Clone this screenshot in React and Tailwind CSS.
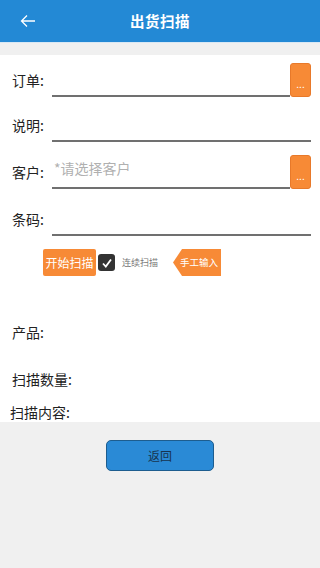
import React from "react";

const font = { fontFamily: '"Noto Sans CJK SC", "Noto Sans", sans-serif' };

function DotsButton() {
  return (
    <div className="w-[21px] h-[34px] shrink-0 rounded-[3px] bg-[#f78a36] border border-[#e8792a] flex items-center justify-center">
      <span className="text-white text-[10px] leading-none mt-[8px]">...</span>
    </div>
  );
}

function Row({ label, placeholder, button, className }) {
  return (
    <div className={"flex h-[34px] " + className}>
      <div className="w-[40px] shrink-0 flex items-center text-[14px] text-[#222]">{label}</div>
      <div className="flex-1 border-b-2 border-[#707070] flex items-start pt-[3px]">
        {placeholder ? (
          <span className="text-[14px] text-[#b0b0b0] ml-[2px]">{placeholder}</span>
        ) : null}
      </div>
      {button ? <DotsButton /> : null}
    </div>
  );
}

export default function App() {
  return (
    <div className="w-[320px] h-[568px] bg-[#f0f0f0] flex flex-col" style={font}>
      <div className="h-[42px] bg-[#2389d5] relative flex items-center justify-center shrink-0">
        <svg className="absolute left-[20px] top-[14px]" width="16" height="14" viewBox="0 0 16 14" fill="none">
          <path d="M15 7H1.5M7 1.5L1.5 7L7 12.5" stroke="white" strokeWidth="1.3" />
        </svg>
        <span className="text-white text-[14.5px] font-bold tracking-[0.5px]">出货扫描</span>
      </div>
      <div className="h-px bg-[#d9e8f4] shrink-0" />
      <div className="h-[12px] shrink-0" />
      <div className="bg-white h-[367px] shrink-0 pl-[12px] pr-[9px] flex flex-col">
        <Row label="订单:" button className="mt-[8px]" />
        <Row label="说明:" className="mt-[11px]" />
        <Row label="客户:" placeholder="*请选择客户" button className="mt-[13px]" />
        <Row label="条码:" className="mt-[13px]" />
        <div className="flex items-center h-[27px] mt-[13px] ml-[31px]">
          <div className="w-[53px] h-[27px] bg-[#f78a36] rounded-[2px] flex items-center justify-center text-white text-[12px]">
            开始扫描
          </div>
          <div className="w-[17px] h-[17px] ml-[2px] bg-[#333] rounded-[3px] flex items-center justify-center">
            <svg width="12" height="12" viewBox="0 0 12 12" fill="none">
              <path d="M2 6.5L4.8 9.5L10 2.5" stroke="white" strokeWidth="1.8" />
            </svg>
          </div>
          <span className="ml-[7px] text-[9px] text-[#777]">连续扫描</span>
          <div className="ml-[15px] w-[48px] h-[27px] bg-[#f78a36] [clip-path:polygon(0_50%,9px_0,100%_0,100%_100%,9px_100%)] flex items-center justify-end pr-[3px] text-white text-[9.5px]">
            手工输入
          </div>
        </div>
        <div className="mt-[46px] text-[14px] leading-[20px] text-[#222]">产品:</div>
        <div className="mt-[27px] text-[14px] leading-[20px] text-[#222]">扫描数量:</div>
        <div className="mt-[13px] -ml-[2px] text-[14px] leading-[20px] text-[#222]">扫描内容:</div>
      </div>
      <div className="flex justify-center mt-[18px]">
        <div className="w-[108px] h-[31px] bg-[#2a8ad6] border border-[#1d5d8f] rounded-[5px] flex items-center justify-center text-[12px] text-[#17344f]">
          返回
        </div>
      </div>
    </div>
  );
}
